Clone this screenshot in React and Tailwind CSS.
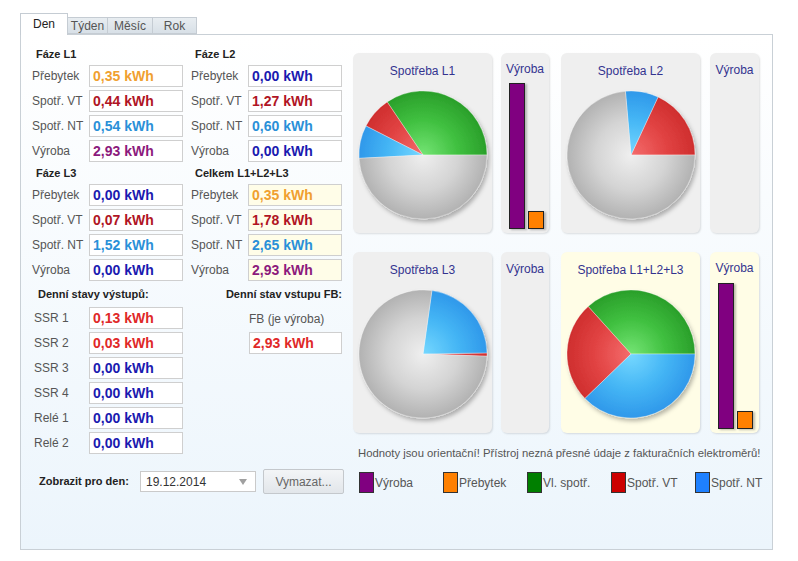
import React from "react";

const pt = (cx, cy, r, a) => {
  const rad = (a * Math.PI) / 180;
  return [cx + r * Math.cos(rad), cy - r * Math.sin(rad)];
};

const slicePath = (cx, cy, r, a1, a2) => {
  const [x1, y1] = pt(cx, cy, r, a1);
  const [x2, y2] = pt(cx, cy, r, a2);
  const large = a2 - a1 > 180 ? 1 : 0;
  return `M ${cx} ${cy} L ${x1} ${y1} A ${r} ${r} 0 ${large} 0 ${x2} ${y2} Z`;
};

const GRAD = {
  gray: ["#efefef", "#d4d4d4", "#b2b2b2"],
  green: ["#74e474", "#40c040", "#2a9f2a"],
  red: ["#f46c6c", "#e24444", "#cf2e2e"],
  blue: ["#76d8ff", "#45b6f5", "#2f98ea"],
};

function Pie({ id, slices }) {
  const cx = 70;
  const cy = 69;
  const r = 64;
  return (
    <svg width="139" height="147" viewBox="0 0 139 147" className="block">
      <defs>
        {Object.entries(GRAD).map(([k, c]) => (
          <radialGradient key={k} id={`${id}-${k}`} cx={cx} cy={cy} r={r} gradientUnits="userSpaceOnUse">
            <stop offset="0%" stopColor={c[0]} />
            <stop offset="55%" stopColor={c[1]} />
            <stop offset="100%" stopColor={c[2]} />
          </radialGradient>
        ))}
        <filter id={`${id}-sh`} x="-20%" y="-20%" width="140%" height="140%">
          <feDropShadow dx="2" dy="3" stdDeviation="2" floodColor="#000" floodOpacity="0.28" />
        </filter>
      </defs>
      <g filter={`url(#${id}-sh)`}>
        {slices.map((s, i) => (
          <path
            key={i}
            d={slicePath(cx, cy, r, s.a1, s.a2)}
            fill={`url(#${id}-${s.c})`}
            stroke="rgba(255,255,255,0.55)"
            strokeWidth="0.6"
          />
        ))}
      </g>
    </svg>
  );
}

function PieCard({ id, title, slices, yellow }) {
  return (
    <div
      className={`w-[139px] shrink-0 h-full rounded-[6px] flex flex-col items-center shadow-[1px_1px_2px_rgba(0,0,0,0.12)] ${
        yellow ? "bg-[#fffde6]" : "bg-[#efefef]"
      }`}
    >
      <div className="h-[33px] w-full flex items-center justify-center text-[12px] text-[#33338f] pt-[2px]">{title}</div>
      <Pie id={id} slices={slices} />
    </div>
  );
}

function BarCard({ yellow, bars, w = "w-[48px]" }) {
  return (
    <div
      className={`${w} shrink-0 h-full rounded-[6px] flex flex-col shadow-[1px_1px_2px_rgba(0,0,0,0.12)] ${
        yellow ? "bg-[#fffde6]" : "bg-[#efefef]"
      }`}
    >
      <div className="h-[32px] w-full flex items-center justify-center text-[12px] text-[#33338f] pt-[1px]">Výroba</div>
      <div className="flex-1 flex items-end gap-[3px] pl-[8px] pb-[4px]">
        {bars &&
          bars.map((b, i) => (
            <div
              key={i}
              className={`w-[16px] border border-[#222] shadow-[2px_1px_2px_rgba(0,0,0,0.25)] ${b.cls}`}
              style={{ height: b.h }}
            />
          ))}
      </div>
    </div>
  );
}

const C = {
  orange: "text-[#f0a030]",
  dred: "text-[#b01424]",
  lblue: "text-[#2a90d8]",
  purple: "text-[#8c1a7c]",
  dblue: "text-[#1a1ab0]",
  red: "text-[#e02828]",
};

function Header({ children, className = "" }) {
  return (
    <div className={`h-[16px] flex items-center pl-[4px] text-[11px] font-bold text-[#222] ${className}`}>{children}</div>
  );
}

function Field({ label, value, color, yellow, labelCls = "" }) {
  return (
    <div className="flex items-center h-[22px]">
      <div className={`w-[57px] text-[12px] text-[#555] ${labelCls}`}>{label}</div>
      <div
        className={`w-[94px] h-[22px] border border-[#cfcfcf] flex items-center pl-[3px] text-[14px] font-bold ${color} ${
          yellow ? "bg-[#fffde8]" : "bg-white"
        }`}
      >
        {value}
      </div>
    </div>
  );
}

function Legend({ color, label }) {
  return (
    <div className="w-[84px] shrink-0 flex items-center">
      <div className={`w-[15px] h-[21px] border border-[#333] ${color}`} />
      <span className="ml-px text-[12px] text-[#555]">{label}</span>
    </div>
  );
}

export default function App() {
  return (
    <div className="w-[798px] h-[561px] bg-white pt-[13px] pl-[20px] font-['Liberation_Sans',Arial,sans-serif]">
      {/* Tabs */}
      <div className="flex items-end h-[21px]">
        <div className="relative z-10 h-[22px] w-[48px] -mb-px bg-white border border-b-0 border-[#c5ccd3] flex items-center justify-center pb-[2px] text-[12px] text-[#222]">
          Den
        </div>
        <div className="h-[17px] w-[40px] border border-l-0 border-[#c5ccd3] bg-gradient-to-b from-[#e8edf1] to-[#d8e0e7] flex items-center justify-center text-[12px] text-[#555]">
          Týden
        </div>
        <div className="h-[17px] w-[45px] border border-l-0 border-[#c5ccd3] bg-gradient-to-b from-[#e8edf1] to-[#d8e0e7] flex items-center justify-center text-[12px] text-[#555]">
          Měsíc
        </div>
        <div className="h-[17px] w-[44px] border border-l-0 border-[#c5ccd3] bg-gradient-to-b from-[#e8edf1] to-[#d8e0e7] flex items-center justify-center text-[12px] text-[#555]">
          Rok
        </div>
      </div>

      {/* Panel */}
      <div className="w-[753px] h-[516px] border border-[#c9d0d6] bg-gradient-to-b from-white to-[#ecf5fc] flex">
        {/* Left column */}
        <div className="w-[332px] shrink-0 pl-[11px] pt-[11px] flex flex-col">
          <div className="grid grid-cols-[151px_151px] gap-x-[8px] gap-y-[3px]">
            <Header>Fáze L1</Header>
            <Header>Fáze L2</Header>
            <Field label="Přebytek" value="0,35 kWh" color={C.orange} />
            <Field label="Přebytek" value="0,00 kWh" color={C.dblue} />
            <Field label="Spotř. VT" value="0,44 kWh" color={C.dred} />
            <Field label="Spotř. VT" value="1,27 kWh" color={C.dred} />
            <Field label="Spotř. NT" value="0,54 kWh" color={C.lblue} />
            <Field label="Spotř. NT" value="0,60 kWh" color={C.lblue} />
            <Field label="Výroba" value="2,93 kWh" color={C.purple} />
            <Field label="Výroba" value="0,00 kWh" color={C.dblue} />

            <Header>Fáze L3</Header>
            <Header>Celkem L1+L2+L3</Header>
            <Field label="Přebytek" value="0,00 kWh" color={C.dblue} />
            <Field label="Přebytek" value="0,35 kWh" color={C.orange} yellow />
            <Field label="Spotř. VT" value="0,07 kWh" color={C.dred} />
            <Field label="Spotř. VT" value="1,78 kWh" color={C.dred} yellow />
            <Field label="Spotř. NT" value="1,52 kWh" color={C.lblue} />
            <Field label="Spotř. NT" value="2,65 kWh" color={C.lblue} yellow />
            <Field label="Výroba" value="0,00 kWh" color={C.dblue} />
            <Field label="Výroba" value="2,93 kWh" color={C.purple} yellow />

            <div className="h-[20px] flex items-center pl-[6px] text-[11px] font-bold text-[#222]">Denní stavy výstupů:</div>
            <div className="h-[20px] flex items-center justify-end pr-0 text-[11px] font-bold text-[#222]">
              Denní stav vstupu FB:
            </div>

            <Field label="SSR 1" value="0,13 kWh" color={C.red} labelCls="pl-[2px]" />
            <div className="h-[22px] flex items-end pl-[58px] pb-[1px] text-[12px] text-[#555]">FB (je výroba)</div>
            <Field label="SSR 2" value="0,03 kWh" color={C.red} labelCls="pl-[2px]" />
            <div className="flex items-center h-[22px] pl-[58px]">
              <div className={`w-[94px] h-[22px] border border-[#cfcfcf] bg-white flex items-center pl-[3px] text-[14px] font-bold ${C.red}`}>
                2,93 kWh
              </div>
            </div>
            <Field label="SSR 3" value="0,00 kWh" color={C.dblue} labelCls="pl-[2px]" />
            <div />
            <Field label="SSR 4" value="0,00 kWh" color={C.dblue} labelCls="pl-[2px]" />
            <div />
            <Field label="Relé 1" value="0,00 kWh" color={C.dblue} labelCls="pl-[2px]" />
            <div />
            <Field label="Relé 2" value="0,00 kWh" color={C.dblue} labelCls="pl-[2px]" />
            <div />
          </div>

          <div className="mt-[15px] h-[25px] flex items-center pl-[7px]">
            <div className="w-[101px] text-[11px] font-bold text-[#222]">Zobrazit pro den:</div>
            <div className="w-[116px] h-[21px] border border-[#cacaca] bg-white flex items-center justify-between pl-[5px] pr-[8px] text-[12px] text-[#333]">
              <span>19.12.2014</span>
              <svg width="8" height="6" viewBox="0 0 8 6">
                <path d="M0 0 L8 0 L4 6 Z" fill="#a0a0a0" />
              </svg>
            </div>
            <div className="ml-[7px] w-[81px] h-[25px] border border-[#c4c8cc] rounded-[2px] bg-gradient-to-b from-[#f3f5f7] to-[#e2e6ea] flex items-center justify-center text-[12px] text-[#666]">
              Vymazat...
            </div>
          </div>
        </div>

        {/* Right column */}
        <div className="flex-1 min-w-0 pt-[18px] flex flex-col">
          <div className="h-[180px] flex">
            <PieCard
              id="p1"
              title="Spotřeba L1"
              slices={[
                { a1: 0, a2: 124, c: "green" },
                { a1: 124, a2: 153, c: "red" },
                { a1: 153, a2: 183, c: "blue" },
                { a1: 183, a2: 360, c: "gray" },
              ]}
            />
            <div className="w-[9px] shrink-0" />
            <BarCard
              bars={[
                { h: 146, cls: "bg-[#800080]" },
                { h: 18, cls: "bg-[#ff8000]" },
              ]}
            />
            <div className="w-[12px] shrink-0" />
            <PieCard
              id="p2"
              title="Spotřeba L2"
              slices={[
                { a1: 0, a2: 65, c: "red" },
                { a1: 65, a2: 95, c: "blue" },
                { a1: 95, a2: 360, c: "gray" },
              ]}
            />
            <div className="w-[10px] shrink-0" />
            <BarCard w="w-[49px]" />
          </div>

          <div className="mt-[19px] h-[181px] flex">
            <PieCard
              id="p3"
              title="Spotřeba L3"
              slices={[
                { a1: -2, a2: 1, c: "red" },
                { a1: 1, a2: 82, c: "blue" },
                { a1: 82, a2: 358, c: "gray" },
              ]}
            />
            <div className="w-[9px] shrink-0" />
            <BarCard />
            <div className="w-[12px] shrink-0" />
            <PieCard
              id="p4"
              yellow
              title="Spotřeba L1+L2+L3"
              slices={[
                { a1: 0, a2: 132, c: "green" },
                { a1: 132, a2: 224, c: "red" },
                { a1: 224, a2: 360, c: "blue" },
              ]}
            />
            <div className="w-[10px] shrink-0" />
            <BarCard
              yellow
              w="w-[49px]"
              bars={[
                { h: 146, cls: "bg-[#800080]" },
                { h: 18, cls: "bg-[#ff8000]" },
              ]}
            />
          </div>

          <div className="mt-[12px] h-[16px] flex items-center pl-[5px] text-[11.3px] text-[#555] whitespace-nowrap">
            Hodnoty jsou orientační! Přístroj nezná přesné údaje z fakturačních elektroměrů!
          </div>

          <div className="mt-[11px] flex pl-[6px]">
            <Legend color="bg-[#800080]" label="Výroba" />
            <Legend color="bg-[#ff8000]" label="Přebytek" />
            <Legend color="bg-[#007f00]" label="Vl. spotř." />
            <Legend color="bg-[#cc0000]" label="Spotř. VT" />
            <Legend color="bg-[#1e80ff]" label="Spotř. NT" />
          </div>
        </div>
      </div>
    </div>
  );
}
